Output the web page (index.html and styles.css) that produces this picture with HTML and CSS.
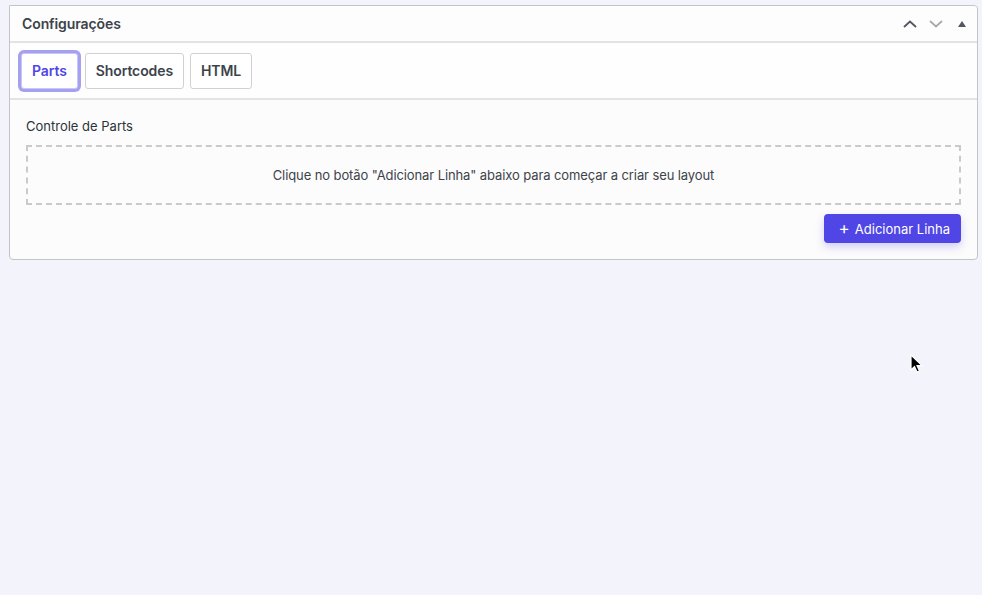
FILE: index.html
```html
<!DOCTYPE html>
<html lang="pt">
<head>
<meta charset="utf-8">
<link rel="stylesheet" href="styles.css">
</head>
<body>
<div class="panel">
  <div class="panel-header">
    <h2 class="panel-title">Configurações</h2>
    <div class="panel-actions">
      <svg class="act act-up" width="16" height="16" viewBox="0 0 16 16"><path d="M2 11 L8 5.5 L14 11" fill="none" stroke="#50575e" stroke-width="1.8"/></svg>
      <svg class="act act-down" width="16" height="16" viewBox="0 0 16 16"><path d="M2 5 L8 10.5 L14 5" fill="none" stroke="#a7aaad" stroke-width="1.8"/></svg>
      <svg class="act act-toggle" width="12" height="16" viewBox="0 0 12 16"><path d="M2 11 L6 5 L10 11 Z" fill="#50575e"/></svg>
    </div>
  </div>
  <div class="tabs">
    <button class="tab active">Parts</button>
    <button class="tab">Shortcodes</button>
    <button class="tab">HTML</button>
  </div>
  <div class="panel-body">
    <div class="section-label">Controle de Parts</div>
    <div class="dropzone">Clique no botão "Adicionar Linha" abaixo para começar a criar seu layout</div>
    <div class="actions-row">
      <button class="btn-primary"><span class="plus">+</span>Adicionar Linha</button>
    </div>
  </div>
</div>
<svg class="cursor" width="14" height="20" viewBox="0 0 14 20"><path d="M1 1 L1 16 L4.5 12.5 L7 18 L9.5 17 L7 11.5 L12 11.5 Z" fill="#000" stroke="#fff" stroke-width="1.2"/></svg>
</body>
</html>
```
FILE: styles.css
```css
html, body {
  margin: 0;
  padding: 0;
}
body {
  background: #f3f3fc;
  font-family: Inter, "Liberation Sans", sans-serif;
  color: #1d2327;
  min-height: 595px;
  position: relative;
}
.panel {
  margin: 5px 5px 0 9px;
  background: #fcfcfc;
  border: 1px solid #c3c4c7;
  border-radius: 0 4px 4px 4px;
  box-sizing: border-box;
  width: 969px;
}
.panel-header {
  height: 35px;
  display: flex;
  align-items: center;
  justify-content: space-between;
  padding: 0 9px 0 12px;
  border-bottom: 2px solid #e2e3e5;
  background: #fdfdfd;
  border-radius: 0 4px 0 0;
}
.panel-title {
  margin: 0;
  font-size: 14px;
  font-weight: 600;
  color: #3c434a;
  letter-spacing: -0.1px;
}
.panel-actions {
  display: flex;
  align-items: center;
  gap: 10px;
}
.act-toggle {
  margin-left: 2px;
}
.tabs {
  height: 55px;
  display: flex;
  align-items: center;
  gap: 6px;
  padding: 0 0 0 8px;
  border-bottom: 2px solid #e2e3e5;
  background: #fefefe;
}
.tab {
  font-family: inherit;
  font-size: 14px;
  font-weight: 600;
  color: #3c434a;
  background: #fff;
  border: 1px solid #d0d1d4;
  border-radius: 3px;
  height: 36px;
  padding: 0 10px;
  cursor: pointer;
  letter-spacing: -0.1px;
}
.tab.active {
  color: #4f46e5;
  border: 1px solid #c9c7f5;
  box-shadow: 0 0 0 3px #a5a1f0;
  margin: 0 1px 0 3px;
  padding: 0 10px;
}
.panel-body {
  padding: 18px 16px 16px 16px;
}
.section-label {
  font-size: 13px;
  color: #2c3338;
  margin-bottom: 11px;
}
.dropzone {
  border: 2px dashed #c9cacc;
  display: flex;
  align-items: center;
  justify-content: center;
  font-size: 13px;
  color: #3c434a;
  box-sizing: border-box;
  height: 60px;
  letter-spacing: -0.1px;
}
.actions-row {
  display: flex;
  justify-content: flex-end;
  margin-top: 9px;
}
.btn-primary {
  font-family: inherit;
  font-size: 13px;
  color: #fff;
  background: #4f46e5;
  border: none;
  border-radius: 4px;
  height: 29px;
  padding: 0 11px 0 15px;
  box-shadow: 0 4px 8px rgba(79, 70, 229, 0.25);
  display: flex;
  align-items: center;
}
.plus {
  font-size: 17px;
  font-weight: 400;
  margin-right: 5px;
  line-height: 1;
}
.cursor {
  position: absolute;
  left: 910px;
  top: 354px;
}
```
